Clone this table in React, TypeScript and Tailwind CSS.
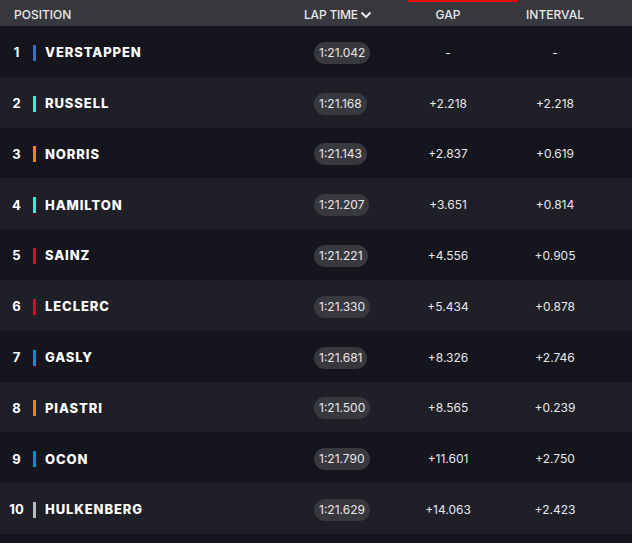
import React from 'react';

interface Row {
  pos: number;
  name: string;
  color: string;
  lap: string;
  gap: string;
  interval: string;
}

const rows: Row[] = [
  { pos: 1, name: 'VERSTAPPEN', color: '#3671c6', lap: '1:21.042', gap: '-', interval: '-' },
  { pos: 2, name: 'RUSSELL', color: '#27f4d2', lap: '1:21.168', gap: '+2.218', interval: '+2.218' },
  { pos: 3, name: 'NORRIS', color: '#ff8000', lap: '1:21.143', gap: '+2.837', interval: '+0.619' },
  { pos: 4, name: 'HAMILTON', color: '#27f4d2', lap: '1:21.207', gap: '+3.651', interval: '+0.814' },
  { pos: 5, name: 'SAINZ', color: '#e8002d', lap: '1:21.221', gap: '+4.556', interval: '+0.905' },
  { pos: 6, name: 'LECLERC', color: '#e8002d', lap: '1:21.330', gap: '+5.434', interval: '+0.878' },
  { pos: 7, name: 'GASLY', color: '#0093cc', lap: '1:21.681', gap: '+8.326', interval: '+2.746' },
  { pos: 8, name: 'PIASTRI', color: '#ff8000', lap: '1:21.500', gap: '+8.565', interval: '+0.239' },
  { pos: 9, name: 'OCON', color: '#0093cc', lap: '1:21.790', gap: '+11.601', interval: '+2.750' },
  { pos: 10, name: 'HULKENBERG', color: '#b6babd', lap: '1:21.629', gap: '+14.063', interval: '+2.423' },
];

const App: React.FC = () => {
  return (
    <div
      className="w-[632px] h-[543px] bg-[#15151e] text-white overflow-hidden"
      style={{ fontFamily: 'Inter, "Noto Sans", sans-serif' }}
    >
      {/* header */}
      <div className="relative flex items-center h-[26px] pt-[4px] bg-[#38383f] text-[12px] font-medium text-[#e8e8ea]">
        <div className="absolute top-0 left-[408px] w-[110px] h-[2px] bg-[#e10600]" />
        <div className="pl-[14px] w-[304px]">POSITION</div>
        <div className="flex items-center w-[84px] tracking-[-0.2px]">
          LAP TIME
          <svg width="12" height="10" viewBox="0 0 12 10" className="ml-[2px]">
            <path d="M1.5 2.5 L6 7 L10.5 2.5" stroke="#e8e8ea" strokeWidth="2" fill="none" />
          </svg>
        </div>
        <div className="w-[120px] text-center">GAP</div>
        <div className="w-[94px] text-center">INTERVAL</div>
      </div>

      {rows.map((r) => (
        <div
          key={r.pos}
          className={`flex items-center h-[50.8px] pt-[3px] ${r.pos % 2 === 0 ? 'bg-[#1f1f27]' : 'bg-[#15151e]'}`}
        >
          <div className="w-[33px] text-center text-[13px] font-bold">{r.pos}</div>
          <div className="w-[3px] h-[16px] mr-[9px]" style={{ backgroundColor: r.color }} />
          <div className="w-[259px] text-[13px] font-extrabold tracking-[0.9px]">{r.name}</div>
          <div className="w-[84px] flex pl-[10px]">
            <span className="bg-[#38383f] rounded-full px-[5px] py-[2px] text-[12px] text-[#e8e8ea]">
              {r.lap}
            </span>
          </div>
          <div className="w-[120px] text-center text-[12px] text-[#e8e8ea]">{r.gap}</div>
          <div className="w-[94px] text-center text-[12px] text-[#e8e8ea]">{r.interval}</div>
        </div>
      ))}
    </div>
  );
};

export default App;
